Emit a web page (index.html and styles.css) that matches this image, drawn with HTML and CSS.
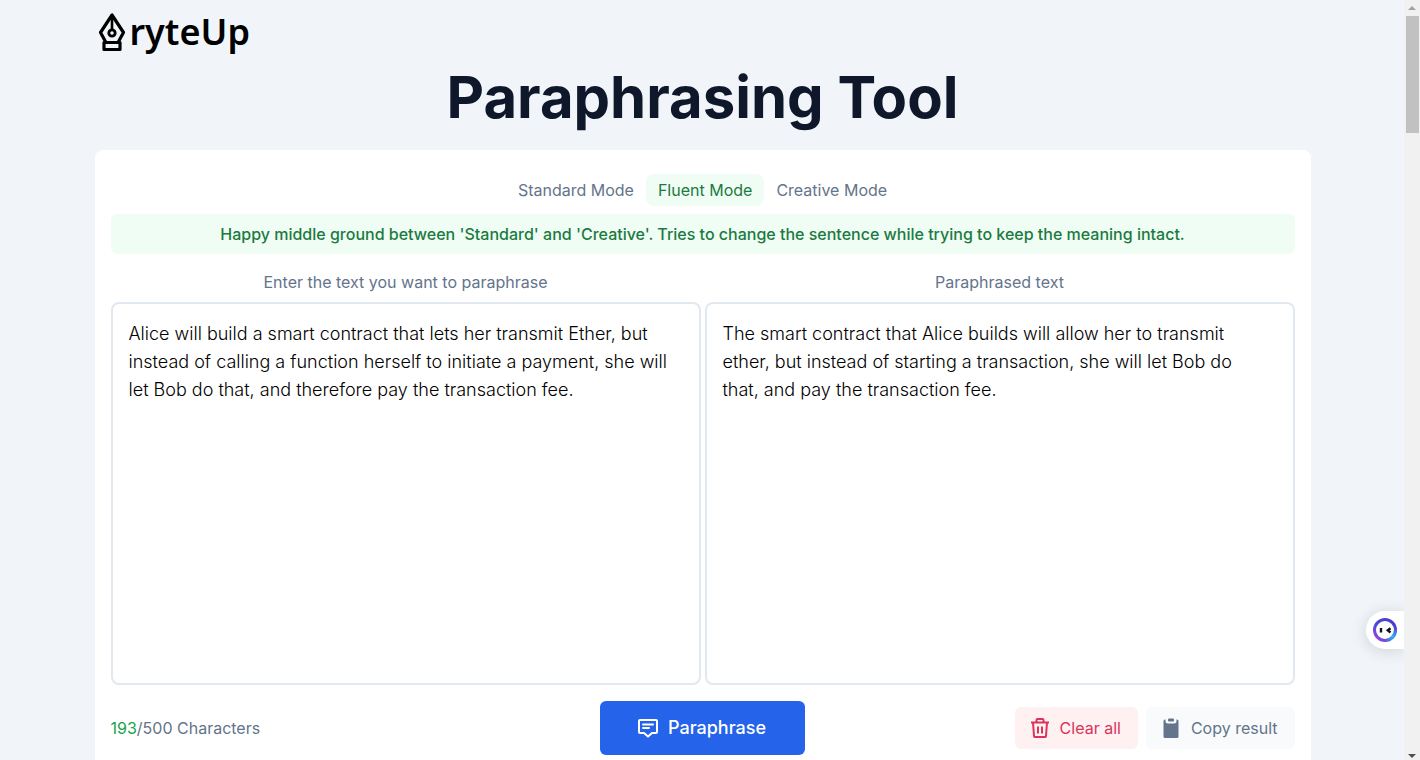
FILE: index.html
```html
<!DOCTYPE html>
<html lang="en">
<head>
<meta charset="utf-8">
<title>ryteUp – Paraphrasing Tool</title>
<link rel="stylesheet" href="styles.css">
</head>
<body>
<div class="page">
  <header class="header">
    <a class="logo" href="#" aria-label="ryteUp">
      <svg class="logo-mark" viewBox="0 0 28 40" fill="none" stroke="currentColor" stroke-width="3.200" stroke-linejoin="round">
        <path d="M14 3 L2.500 20.500 L8 30.500 H20 L25.500 20.500 Z"/>
        <rect x="6" y="30.500" width="16" height="7"/>
        <path d="M14 3 V18" stroke-width="2.600"/>
        <circle cx="14" cy="21" r="3.200" stroke-width="2.800"/>
      </svg>
      <span>ryteUp</span>
    </a>
  </header>
  <main>
    <h1 class="title">Paraphrasing Tool</h1>
    <section class="card">
      <nav class="modes">
        <button type="button" class="mode">Standard Mode</button>
        <button type="button" class="mode active">Fluent Mode</button>
        <button type="button" class="mode">Creative Mode</button>
      </nav>
      <p class="hint">Happy middle ground between 'Standard' and 'Creative'. Tries to change the sentence while trying to keep the meaning intact.</p>
      <div class="editors">
        <div class="editor">
          <label for="source">Enter the text you want to paraphrase</label>
          <textarea id="source" spellcheck="false">Alice will build a smart contract that lets her transmit Ether, but instead of calling a function herself to initiate a payment, she will let Bob do that, and therefore pay the transaction fee.</textarea>
        </div>
        <div class="editor">
          <label for="result">Paraphrased text</label>
          <textarea id="result" spellcheck="false">The smart contract that Alice builds will allow her to transmit ether, but instead of starting a transaction, she will let Bob do that, and pay the transaction fee.</textarea>
        </div>
      </div>
      <div class="actions">
        <p class="count"><span class="used">193</span>/500 Characters</p>
        <button type="button" class="primary">
          <svg class="icon" viewBox="0 0 24 24" fill="none" stroke="currentColor" stroke-width="2" stroke-linejoin="round" stroke-linecap="round">
            <path d="M4 4H20A1 1 0 0 1 21 5V16A1 1 0 0 1 20 17H16L12 20.500L8 17H4A1 1 0 0 1 3 16V5A1 1 0 0 1 4 4Z"/>
            <path d="M7 8.500H17M7 12H13"/>
          </svg>
          Paraphrase
        </button>
        <div class="secondary">
          <button type="button" class="clear">
            <svg class="icon" viewBox="0 0 24 24" fill="none" stroke="currentColor" stroke-width="2" stroke-linejoin="round">
              <path d="M3 6.500H21M5 6.500L6 20A1.200 1.200 0 0 0 7.200 21H16.800A1.200 1.200 0 0 0 18 20L19 6.500M8.500 6.500V4A1 1 0 0 1 9.500 3H14.500A1 1 0 0 1 15.500 4V6.500M10 10.500V17.500M14 10.500V17.500"/>
            </svg>
            Clear all
          </button>
          <button type="button" class="copy">
            <svg class="icon" viewBox="0 0 24 24" fill="currentColor">
              <path d="M6.500 3.500V5A2.500 2.500 0 0 0 9 7.500H15A2.500 2.500 0 0 0 17.500 5V3.500H18A1.500 1.500 0 0 1 19.500 5V20.500A1.500 1.500 0 0 1 18 22H6A1.500 1.500 0 0 1 4.500 20.500V5A1.500 1.500 0 0 1 6 3.500Z"/>
              <rect x="9" y="2.500" width="6" height="3" rx="1"/>
            </svg>
            Copy result
          </button>
        </div>
      </div>
    </section>
  </main>
</div>
<button type="button" class="assistant" aria-label="Assistant">
  <svg class="face" viewBox="0 0 24 24" fill="none">
    <defs>
      <linearGradient id="ring" x1="0" y1="1" x2="1" y2="0">
        <stop offset="0" stop-color="#b43be0"/><stop offset=".4" stop-color="#4a4bd8"/><stop offset="1" stop-color="#4a3cc9"/>
      </linearGradient>
      <radialGradient id="glow" cx=".85" cy=".8" r=".45">
        <stop offset="0" stop-color="#35b5ea"/><stop offset="1" stop-color="#35b5ea" stop-opacity="0"/>
      </radialGradient>
    </defs>
    <circle cx="12" cy="12" r="10.500" fill="#fff" stroke="url(#ring)" stroke-width="3"/>
    <circle cx="12" cy="12" r="10.500" stroke="url(#glow)" stroke-width="3"/>
    <path d="M8 10V14.500M17.500 10.300L14.800 12.300L17.500 14.500" stroke="#111" stroke-width="2.400"/>
  </svg>
</button>
<div class="scrollbar" aria-hidden="true">
  <svg class="arrow" viewBox="0 0 16 16"><path d="M4 10L8 6L12 10Z" fill="#a3a3a3"/></svg>
  <div class="thumb"></div>
  <svg class="arrow" viewBox="0 0 16 16"><path d="M4 10L8 14L12 10Z" fill="#505050"/></svg>
</div>
</body>
</html>
```
FILE: styles.css
```css
* { box-sizing: border-box; }
body {
  margin: 0;
  padding-right: 15px;
  height: 100vh;
  overflow: hidden;
  background: #f1f5f9;
  color: #64748b;
  font: 16px/24px Inter, sans-serif;
}
h1, p { margin: 0; }
button { font: inherit; color: inherit; border: 0; background: none; cursor: pointer; }
.page { max-width: 1216px; margin: 0 auto; }
.header { padding: 12px 3px 0; }
.logo {
  display: flex;
  width: fit-content;
  align-items: center;
  gap: 4px;
  height: 40px;
  color: #000;
  font: 600 36px/40px "Noto Sans", sans-serif;
  text-decoration: none;
}
.logo-mark { width: 28px; height: 40px; }
.title {
  margin: 14px 0 22px;
  color: #0f172a;
  font-size: 58px;
  line-height: 62px;
  font-weight: 700;
  text-align: center;
}
.card { padding: 24px 16px; border-radius: 8px; background: #fff; }
.modes { display: flex; justify-content: center; margin-bottom: 8px; }
.mode { padding: 4px 12px; border-radius: 8px; }
.mode.active { background: #f0fdf4; color: #1b7a41; }
.hint {
  padding: 8px;
  border-radius: 6px;
  background: #f0fdf4;
  color: #1b7a41;
  font-weight: 500;
  text-align: center;
}
.editors { display: grid; grid-template-columns: 1fr 1fr; gap: 4px; margin-top: 16px; }
.editor { display: flex; flex-direction: column; gap: 8px; }
.editor label { text-align: center; }
.editor textarea {
  display: block;
  height: 383px;
  padding: 16px 20px 16px 16px;
  border: 2px solid #e2e8f0;
  border-radius: 8px;
  background: #fff;
  color: #000;
  font: 350 18px/28px Inter, sans-serif;
  resize: none;
  outline: 0;
}
.actions {
  display: grid;
  grid-template-columns: 1fr auto 1fr;
  align-items: center;
  margin-top: 16px;
}
.used { color: #16a34a; }
.icon { width: 24px; height: 24px; }
.primary, .clear, .copy { display: flex; align-items: center; gap: 8px; }
.primary {
  padding: 15px 39px 15px 36px;
  border-radius: 6px;
  background: #2563eb;
  color: #fff;
  font-size: 18px;
  font-weight: 500;
}
.secondary { display: flex; justify-content: flex-end; gap: 8px; }
.clear, .copy { padding: 9px 17px 9px 13px; border-radius: 6px; }
.clear { background: #fff1f2; color: #d9345a; }
.copy { background: #f8fafc; }
.assistant {
  position: fixed;
  right: 16px;
  top: 611px;
  display: flex;
  padding: 7px;
  border-radius: 20px 0 0 20px;
  background: #fff;
  box-shadow: 0 2px 16px rgba(15, 23, 42, 0.15);
}
.face { width: 24px; height: 24px; }
.scrollbar {
  position: fixed;
  top: 0;
  right: 0;
  bottom: 0;
  display: flex;
  flex-direction: column;
  width: 16px;
  background: #f1f1f1;
}
.arrow { width: 16px; height: 16px; }
.thumb { height: 117px; margin: 0 1px auto 2px; background: #c1c1c1; }
```
